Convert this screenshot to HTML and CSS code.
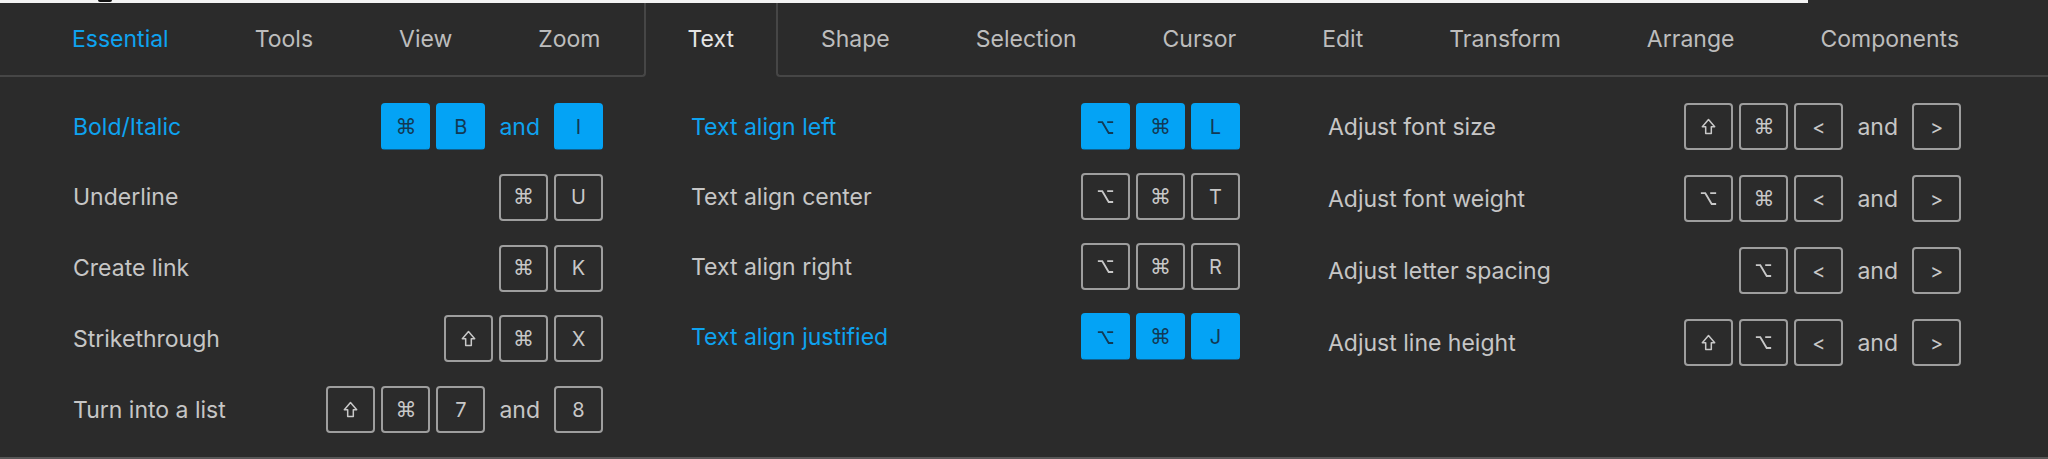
FILE: index.html
```html
<!DOCTYPE html>
<html lang="en">
<head>
<meta charset="utf-8">
<title>Keyboard shortcuts – Text</title>
<link rel="stylesheet" href="styles.css">
</head>
<body>
<svg class="defs" width="0" height="0" aria-hidden="true">
  <symbol id="i-shift" viewBox="0 0 16 18"><path d="M8 1.6 L14.6 9.2 H11 V16.4 H5 V9.2 H1.4 Z" fill="none" stroke="currentColor" stroke-width="1.6" stroke-linejoin="round"/></symbol>
  <symbol id="i-opt" viewBox="0 0 16 14"><path d="M0.8 2 H5 L11 12.2 H15.2 M9.6 2 H15.2" fill="none" stroke="currentColor" stroke-width="1.7"/></symbol>
</svg>
<div class="topstrip"><span class="speck"></span></div>
<nav class="tabs">
  <div class="tabgroup tabgroup-left">
    <span class="tab tab-current">Essential</span>
    <span class="tab">Tools</span>
    <span class="tab">View</span>
    <span class="tab">Zoom</span>
  </div>
  <span class="tab tab-active">Text</span>
  <div class="tabgroup tabgroup-right">
    <span class="tab">Shape</span>
    <span class="tab">Selection</span>
    <span class="tab">Cursor</span>
    <span class="tab">Edit</span>
    <span class="tab">Transform</span>
    <span class="tab">Arrange</span>
    <span class="tab">Components</span>
  </div>
</nav>
<main class="columns">
  <section class="col col-1">
    <div class="row row-hl"><span class="label">Bold/Italic</span><span class="keys"><kbd class="sym">⌘</kbd><kbd>B</kbd><span class="and">and</span><kbd>I</kbd></span></div>
    <div class="row"><span class="label">Underline</span><span class="keys"><kbd class="sym">⌘</kbd><kbd>U</kbd></span></div>
    <div class="row"><span class="label">Create link</span><span class="keys"><kbd class="sym">⌘</kbd><kbd>K</kbd></span></div>
    <div class="row"><span class="label">Strikethrough</span><span class="keys"><kbd><svg class="ico ico-shift"><use href="#i-shift"/></svg></kbd><kbd class="sym">⌘</kbd><kbd>X</kbd></span></div>
    <div class="row"><span class="label">Turn into a list</span><span class="keys"><kbd><svg class="ico ico-shift"><use href="#i-shift"/></svg></kbd><kbd class="sym">⌘</kbd><kbd>7</kbd><span class="and">and</span><kbd>8</kbd></span></div>
  </section>
  <section class="col col-2">
    <div class="row row-hl"><span class="label">Text align left</span><span class="keys"><kbd><svg class="ico ico-opt"><use href="#i-opt"/></svg></kbd><kbd class="sym">⌘</kbd><kbd>L</kbd></span></div>
    <div class="row"><span class="label">Text align center</span><span class="keys"><kbd><svg class="ico ico-opt"><use href="#i-opt"/></svg></kbd><kbd class="sym">⌘</kbd><kbd>T</kbd></span></div>
    <div class="row"><span class="label">Text align right</span><span class="keys"><kbd><svg class="ico ico-opt"><use href="#i-opt"/></svg></kbd><kbd class="sym">⌘</kbd><kbd>R</kbd></span></div>
    <div class="row row-hl"><span class="label">Text align justified</span><span class="keys"><kbd><svg class="ico ico-opt"><use href="#i-opt"/></svg></kbd><kbd class="sym">⌘</kbd><kbd>J</kbd></span></div>
  </section>
  <section class="col col-3">
    <div class="row"><span class="label">Adjust font size</span><span class="keys"><kbd><svg class="ico ico-shift"><use href="#i-shift"/></svg></kbd><kbd class="sym">⌘</kbd><kbd>&lt;</kbd><span class="and">and</span><kbd>&gt;</kbd></span></div>
    <div class="row"><span class="label">Adjust font weight</span><span class="keys"><kbd><svg class="ico ico-opt"><use href="#i-opt"/></svg></kbd><kbd class="sym">⌘</kbd><kbd>&lt;</kbd><span class="and">and</span><kbd>&gt;</kbd></span></div>
    <div class="row"><span class="label">Adjust letter spacing</span><span class="keys"><kbd><svg class="ico ico-opt"><use href="#i-opt"/></svg></kbd><kbd>&lt;</kbd><span class="and">and</span><kbd>&gt;</kbd></span></div>
    <div class="row"><span class="label">Adjust line height</span><span class="keys"><kbd><svg class="ico ico-shift"><use href="#i-shift"/></svg></kbd><kbd><svg class="ico ico-opt"><use href="#i-opt"/></svg></kbd><kbd>&lt;</kbd><span class="and">and</span><kbd>&gt;</kbd></span></div>
  </section>
</main>
<div class="bottomstrip"></div>
</body>
</html>
```

FILE: styles.css
```css
* { box-sizing: border-box; }

html, body {
  margin: 0;
  padding: 0;
}

body {
  background: #2b2b2b;
  font-family: Inter, "Noto Sans", "DejaVu Sans", sans-serif;
  color: #c6c6c6;
  min-height: 100vh;
  display: flex;
  flex-direction: column;
  overflow: hidden;
}

.defs {
  position: absolute;
  width: 0;
  height: 0;
}

.topstrip {
  height: 3px;
  width: 1808px;
  background: #f3f3f3;
  display: flex;
}

.speck {
  margin-left: 98px;
  width: 14px;
  height: 2px;
  background: #111;
  border-radius: 0 0 4px 4px;
}

/* ---------- tabs ---------- */
.tabs {
  display: flex;
  height: 74px;
  font-size: 23px;
}

.tabgroup {
  display: flex;
  align-items: center;
  border-bottom: 2px solid #464646;
}

.tabgroup-left {
  padding-left: 29px;
  border-right: 2px solid #464646;
  border-bottom-right-radius: 4px;
}

.tabgroup-right {
  flex: 1;
  border-left: 2px solid #464646;
  border-bottom-left-radius: 4px;
}

.tab {
  display: flex;
  align-items: center;
  padding: 0 43px;
  color: #bdbdbd;
  white-space: nowrap;
}

.tab-current { color: #0ea3f0; }

.tab-active {
  color: #e4e4e4;
  padding: 0 42px 2px;
}

/* ---------- columns ---------- */
.columns {
  flex: 1;
  display: grid;
  grid-template-columns: 530px 549px 633px;
  column-gap: 88px;
  align-items: start;
  padding: 26px 0 0 73px;
}

.col {
  display: flex;
  flex-direction: column;
}

.col-1 { row-gap: 23.75px; }
.col-2 { row-gap: 23px; }
.col-3 { row-gap: 25px; }

.row {
  display: flex;
  align-items: center;
  justify-content: space-between;
  height: 47px;
}

.label {
  font-size: 23px;
  color: #c6c6c6;
  white-space: nowrap;
}

.keys {
  display: flex;
  align-items: center;
  gap: 6px;
}

kbd {
  width: 49px;
  height: 47px;
  display: flex;
  align-items: center;
  justify-content: center;
  border: 2px solid #9e9e9e;
  border-radius: 4px;
  font-family: Inter, "DejaVu Sans", sans-serif;
  font-size: 20px;
  color: #c8c8c8;
}

kbd.sym {
  font-family: "DejaVu Sans", sans-serif;
  font-size: 21px;
}

.ico { display: block; }
.ico-shift { width: 15px; height: 17px; }
.ico-opt { width: 17px; height: 15px; }

.and {
  font-size: 23px;
  margin: 0 8px;
  color: #c6c6c6;
}

.row-hl .label,
.row-hl .and { color: #0ea3f0; }

.row-hl kbd {
  background: #04a3f5;
  border-color: #04a3f5;
  border-bottom-color: #10608e;
  border-bottom-width: 1px;
  color: #123a55;
}

/* ---------- bottom ---------- */
.bottomstrip {
  height: 2px;
  background: #575757;
}
```
